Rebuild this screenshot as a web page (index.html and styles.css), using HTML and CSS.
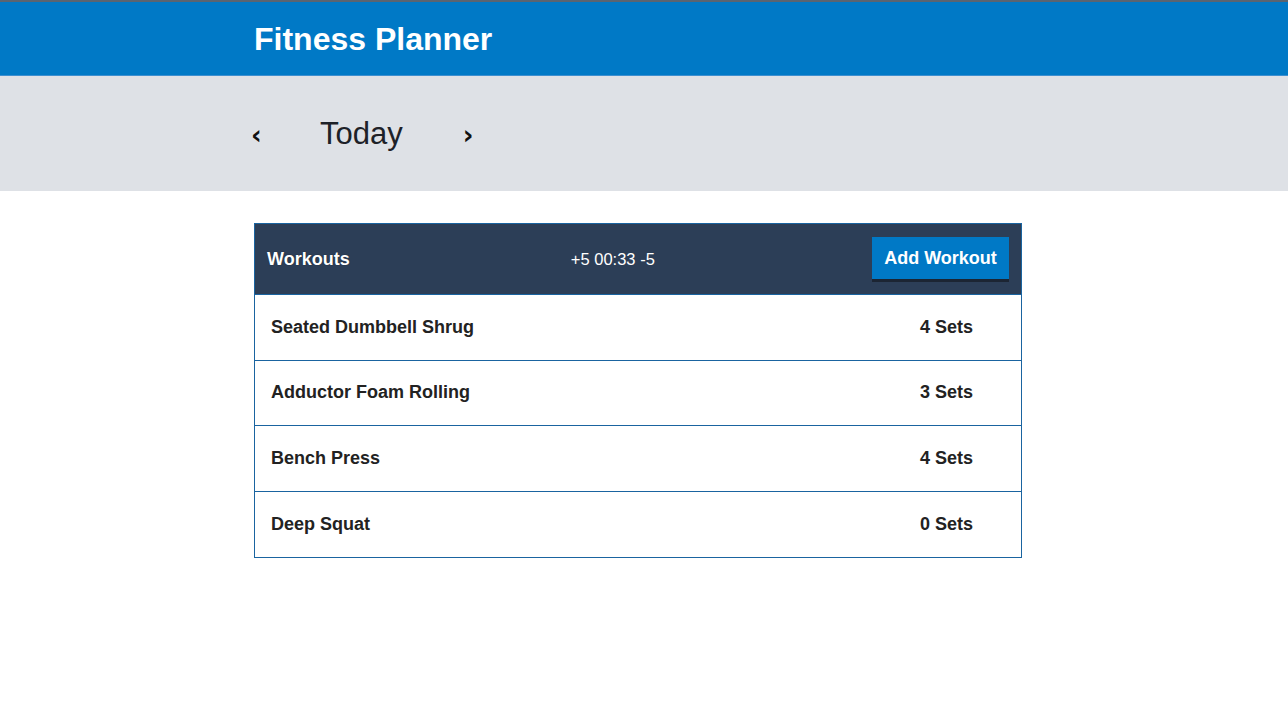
FILE: index.html
```html
<!DOCTYPE html>
<html>
<head>
<meta charset="utf-8">
<link rel="stylesheet" href="styles.css">
</head>
<body>
<header class="topbar">
  <div class="wrap">
    <h1 class="brand">Fitness Planner</h1>
  </div>
</header>
<section class="daybar">
  <div class="wrap daynav">
    <button class="arrow">&#8249;</button>
    <span class="day">Today</span>
    <button class="arrow">&#8250;</button>
  </div>
</section>
<main class="wrap">
  <div class="card">
    <div class="card-head">
      <span class="card-title">Workouts</span>
      <span class="timer"><span>+5</span> <span>00:33</span> <span>-5</span></span>
      <button class="add">Add Workout</button>
    </div>
    <div class="row"><span class="name">Seated Dumbbell Shrug</span><span class="sets">4 Sets</span></div>
    <div class="row"><span class="name">Adductor Foam Rolling</span><span class="sets">3 Sets</span></div>
    <div class="row"><span class="name">Bench Press</span><span class="sets">4 Sets</span></div>
    <div class="row"><span class="name">Deep Squat</span><span class="sets">0 Sets</span></div>
  </div>
</main>
</body>
</html>
```
FILE: styles.css
```css
* { box-sizing: border-box; }
body {
  margin: 0;
  font-family: "Liberation Sans", Arial, sans-serif;
  color: #222;
  background: #fff;
  border-top: 2px solid #5a6470;
}
.wrap {
  width: 768px;
  margin-left: calc(50% - 390px);
}
.topbar {
  background: #0079c6;
  height: 74px;
  display: flex;
  align-items: center;
  border-bottom: 1px solid #3d8fd0;
}
.brand {
  margin: 0;
  color: #fff;
  font-size: 32px;
  font-weight: bold;
  padding-top: 1px;
}
.daybar {
  background: #dee1e6;
  height: 115px;
  display: flex;
  align-items: center;
}
.daynav {
  display: flex;
  align-items: center;
  padding-top: 2px;
}
.arrow {
  background: none;
  border: 0;
  padding: 0;
  font-family: "DejaVu Sans", sans-serif;
  font-size: 26px;
  font-weight: bold;
  color: #111;
  width: 8px;
  margin-left: -3px;
  line-height: 1;
}
.day {
  font-size: 31px;
  color: #1d2128;
  margin: 0 63px 0 61px;
  padding-bottom: 2px;
}
main.wrap { padding-top: 32px; }
.card {
  border: 1px solid #1a64a0;
  width: 768px;
}
.card-head {
  background: #2c3e57;
  height: 71px;
  display: flex;
  align-items: center;
  justify-content: space-between;
  padding: 0 12px 0 12px;
  border-bottom: 1px solid #1a64a0;
  color: #fff;
}
.card-title {
  font-size: 18px;
  font-weight: bold;
  text-shadow: 0 0 1px rgba(0,0,0,0.6);
}
.timer {
  font-size: 16.5px;
  margin-left: 4px;
}
.add {
  background: #0079c6;
  color: #fff;
  border: 0;
  font-family: "Liberation Sans", Arial, sans-serif;
  font-size: 18px;
  font-weight: bold;
  height: 42px;
  width: 137px;
  padding: 1px 0 0;
  box-shadow: 0 3px 0 #1c2533;
  margin-top: -3px;
}
.row {
  height: 65.66px;
  display: flex;
  align-items: center;
  justify-content: space-between;
  padding: 0 48px 0 16px;
  border-bottom: 1px solid #1a64a0;
  font-size: 18px;
  font-weight: bold;
  color: #222;
}
.row:last-child { border-bottom: 0; height: 64.66px; }
```
